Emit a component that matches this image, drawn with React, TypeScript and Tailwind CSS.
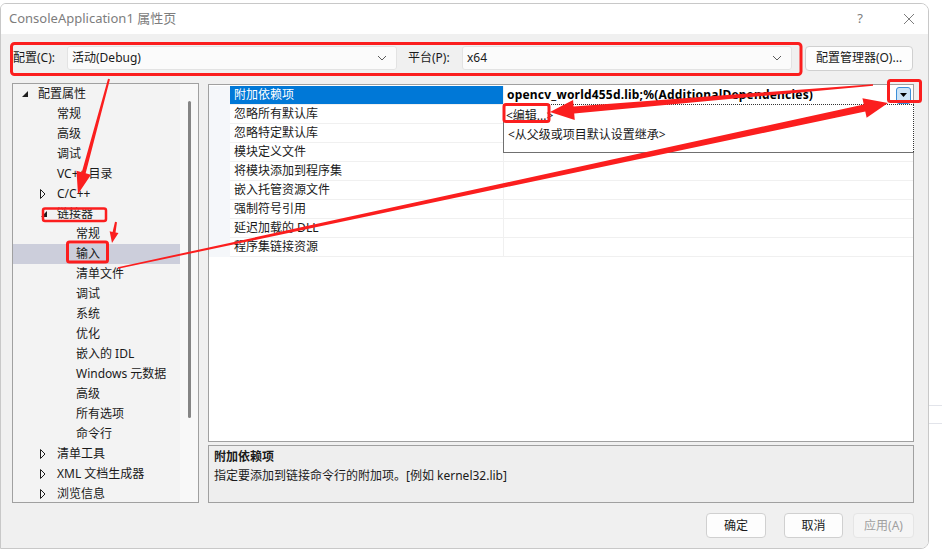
import React from 'react'

const FONT = "font-['Noto_Sans','Noto_Sans_CJK_SC',sans-serif]"
const RED = '#fb1e1e'

type TreeNode = { label: string; level: 0 | 1 | 2; kind?: 'open' | 'closed'; selected?: boolean }

const tree: TreeNode[] = [
  { label: '配置属性', level: 0, kind: 'open' },
  { label: '常规', level: 1 },
  { label: '高级', level: 1 },
  { label: '调试', level: 1 },
  { label: 'VC++ 目录', level: 1 },
  { label: 'C/C++', level: 1, kind: 'closed' },
  { label: '链接器', level: 1, kind: 'open' },
  { label: '常规', level: 2 },
  { label: '输入', level: 2, selected: true },
  { label: '清单文件', level: 2 },
  { label: '调试', level: 2 },
  { label: '系统', level: 2 },
  { label: '优化', level: 2 },
  { label: '嵌入的 IDL', level: 2 },
  { label: 'Windows 元数据', level: 2 },
  { label: '高级', level: 2 },
  { label: '所有选项', level: 2 },
  { label: '命令行', level: 2 },
  { label: '清单工具', level: 1, kind: 'closed' },
  { label: 'XML 文档生成器', level: 1, kind: 'closed' },
  { label: '浏览信息', level: 1, kind: 'closed' },
]

const levelPad = ['pl-[6px]', 'pl-[25px]', 'pl-[44px]']

const props = [
  '附加依赖项',
  '忽略所有默认库',
  '忽略特定默认库',
  '模块定义文件',
  '将模块添加到程序集',
  '嵌入托管资源文件',
  '强制符号引用',
  '延迟加载的 DLL',
  '程序集链接资源',
]

function Chevron() {
  return (
    <svg width="10" height="6" viewBox="0 0 10 6">
      <polyline points="1,1 5,5 9,1" fill="none" stroke="#5c5c5c" strokeWidth="1" />
    </svg>
  )
}

function Expander({ kind }: { kind?: 'open' | 'closed' }) {
  if (kind === 'open')
    return (
      <svg width="8" height="8" viewBox="0 0 8 8">
        <polygon points="7,1 7,7 1,7" fill="#1e1e1e" />
      </svg>
    )
  if (kind === 'closed')
    return (
      <svg width="6" height="10" viewBox="0 0 6 10">
        <polygon points="0.5,0.5 5,5 0.5,9.5" fill="none" stroke="#1e1e1e" strokeWidth="1" />
      </svg>
    )
  return null
}

function Combo({ value, width }: { value: string; width: string }) {
  return (
    <div className={`${width} h-[24px] flex items-center justify-between pl-[4px] pr-[9px] bg-[#fbfbfb] border border-[#e3e3e3] rounded-[3px]`}>
      <span>{value}</span>
      <Chevron />
    </div>
  )
}

function arrowPoints(x1: number, y1: number, x2: number, y2: number, w0: number, w1: number, hl: number, hw: number) {
  const dx = x2 - x1
  const dy = y2 - y1
  const len = Math.hypot(dx, dy)
  const ux = dx / len
  const uy = dy / len
  const px = -uy
  const py = ux
  const bx = x2 - ux * hl
  const by = y2 - uy * hl
  const pts = [
    [x1 + (px * w0) / 2, y1 + (py * w0) / 2],
    [bx + (px * w1) / 2, by + (py * w1) / 2],
    [bx + (px * hw) / 2, by + (py * hw) / 2],
    [x2, y2],
    [bx - (px * hw) / 2, by - (py * hw) / 2],
    [bx - (px * w1) / 2, by - (py * w1) / 2],
    [x1 - (px * w0) / 2, y1 - (py * w0) / 2],
  ]
  return pts.map(p => p.join(',')).join(' ')
}

function Annotations() {
  return (
    <svg className="absolute top-0 left-0 pointer-events-none" width="942" height="555" viewBox="0 0 942 555">
      <g fill="none" stroke={RED} strokeWidth="3">
        <rect x="11.5" y="43.5" width="789.5" height="31" rx="3" />
        <rect x="43" y="208.5" width="63" height="12.5" rx="2" strokeWidth="2.5" />
        <rect x="67.5" y="242" width="40" height="20" rx="2" />
        <rect x="888.5" y="80.5" width="32" height="21" rx="2" />
        <rect x="504" y="104.5" width="45" height="17" rx="2" />
      </g>
      <g fill={RED}>
        <polygon points={arrowPoints(109, 79, 78, 194, 2, 4, 22, 15)} />
        <polygon points={arrowPoints(116, 222, 112, 243, 2, 3, 11, 9)} />
        <polygon points={arrowPoints(118, 268, 888, 103, 1.5, 7, 24, 20)} />
        <polygon points={arrowPoints(873, 85, 550, 112, 1.5, 7, 24, 20)} />
      </g>
    </svg>
  )
}

export default function App() {
  return (
    <div className={`${FONT} relative w-[942px] h-[555px] bg-white overflow-hidden text-[12px] text-[#1a1a1a] flex`}>
      <div className="mt-[3px] w-[929px] h-[546px] flex flex-col border border-[#c8c8c8] rounded-r-[8px] rounded-tl-[6px] overflow-hidden">
        {/* title bar */}
        <div className="h-[30px] bg-white flex items-center pl-[8px] text-[13px] text-[#7d7d7d]">
          <span className="flex-1">ConsoleApplication1 属性页</span>
          <span className="w-[20px] text-center">?</span>
          <svg className="ml-[33px] mr-[13px]" width="12" height="12" viewBox="0 0 12 12">
            <path d="M1 1 L11 11 M11 1 L1 11" stroke="#7d7d7d" strokeWidth="1" />
          </svg>
        </div>

        <div className="flex-1 bg-[#f0f0f0] flex flex-col pl-[11px] pr-[14px] pt-[12px]">
          {/* configuration row */}
          <div className="h-[24px] flex items-center">
            <span className="w-[55px] pl-[1px]">配置(C):</span>
            <Combo value="活动(Debug)" width="w-[330px]" />
            <span className="w-[65px] pl-[11px]">平台(P):</span>
            <Combo value="x64" width="w-[330px]" />
            <button className="ml-[13px] w-[108px] h-[25px] bg-[#fdfdfd] border border-[#d0d0d0] rounded-[4px]">配置管理器(O)...</button>
          </div>

          {/* main area */}
          <div className="mt-[13px] h-[420px] flex">
            {/* tree */}
            <div className="w-[187px] h-[420px] border border-[#a0a0a0] bg-[#f3f3f3] flex overflow-hidden">
              <div className="w-[167px] flex flex-col">
                {tree.map((n, i) => (
                  <div
                    key={i}
                    className={`h-[20px] shrink-0 flex items-center ${levelPad[n.level]} ${n.selected ? 'bg-[#cccedb]' : ''}`}
                  >
                    <span className="w-[19px] pl-[2px] flex items-center">
                      <Expander kind={n.kind} />
                    </span>
                    <span>{n.label}</span>
                  </div>
                ))}
              </div>
              <div className="flex-1 bg-[#f8f8f8] flex justify-center pt-[17px]">
                <div className="w-[3px] h-[317px] bg-[#858585] rounded-full" />
              </div>
            </div>

            {/* right column */}
            <div className="ml-[9px] flex-1 flex flex-col pt-[1px]">
              <div className="relative h-[358px] border border-[#a0a0a0] bg-white pt-[1px]">
                {props.map((p, i) => (
                  <div key={i} className="h-[19px] flex">
                    <div className="w-[21px] bg-[#f5f7fa]" />
                    <div
                      className={`w-[274px] pl-[4px] flex items-center border-b border-r border-[#f0f0f0] ${
                        i === 0 ? 'bg-[#0078d7] text-white' : ''
                      }`}
                    >
                      {p}
                    </div>
                    <div className="flex-1 flex items-center justify-between pl-[3px] pr-[2px] border-b border-[#f0f0f0]">
                      {i === 0 && (
                        <>
                          <span className="font-bold text-black tracking-[0.2px]">opencv_world455d.lib;%(AdditionalDependencies)</span>
                          <span className="w-[15px] h-[17px] bg-[#cce4f7] border border-[#3c8ed8] rounded-[3px] flex items-center justify-center">
                            <svg width="7" height="4" viewBox="0 0 7 4">
                              <polygon points="0,0 7,0 3.5,4" fill="#000" />
                            </svg>
                          </span>
                        </>
                      )}
                    </div>
                  </div>
                ))}

                {/* dropdown list */}
                <div className="absolute left-[294px] top-[19px] w-[411px] h-[49px] bg-white border-l border-b border-[#707070]">
                  <div className="h-full border-t border-r border-dotted border-[#333] flex flex-col pt-[1px]">
                    <div className="h-[19px] flex items-center pl-[2px]">&lt;编辑...&gt;</div>
                    <div className="h-[19px] flex items-center pl-[4px]">&lt;从父级或项目默认设置继承&gt;</div>
                  </div>
                </div>
              </div>

              <div className="mt-[3px] h-[58px] border border-[#a0a0a0] bg-[#eeeeee] pl-[5px] pt-[1px]">
                <div className="h-[19px] flex items-center font-bold">附加依赖项</div>
                <div className="h-[20px] flex items-center">指定要添加到链接命令行的附加项。[例如 kernel32.lib]</div>
              </div>
            </div>
          </div>

          {/* buttons */}
          <div className="mt-[10px] h-[25px] flex justify-end">
            <button className="w-[60px] h-[25px] bg-[#fdfdfd] border border-[#d0d0d0] rounded-[4px]">确定</button>
            <button className="ml-[18px] w-[59px] h-[25px] bg-[#fdfdfd] border border-[#d0d0d0] rounded-[4px]">取消</button>
            <button className="ml-[10px] w-[61px] h-[25px] bg-[#f5f5f5] border border-[#e5e5e5] rounded-[4px] text-[#a0a0a0]">应用(A)</button>
          </div>
        </div>
      </div>

      {/* background peeking on the right */}
      <div className="flex-1 flex flex-col">
        <div className="h-[405px]" />
        <div className="h-[1px] bg-[#e2e4ea]" />
        <div className="h-[17px]" />
        <div className="h-[1px] bg-[#e2e4ea]" />
      </div>

      <Annotations />
    </div>
  )
}
